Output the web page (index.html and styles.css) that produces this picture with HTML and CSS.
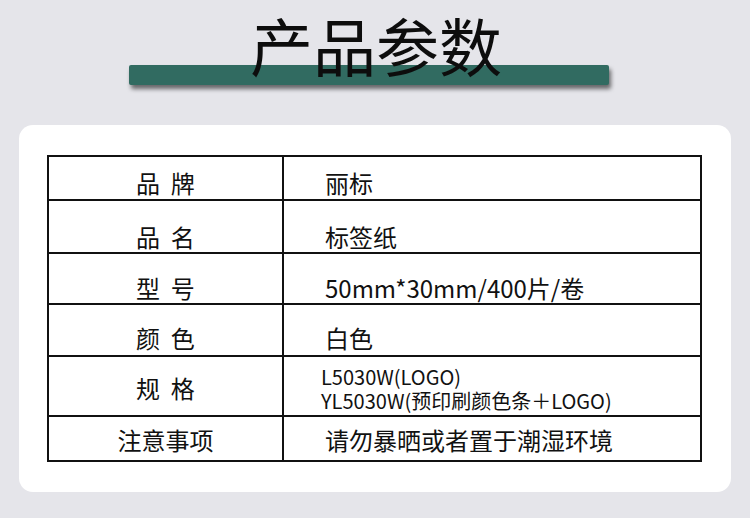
FILE: index.html
```html
<!DOCTYPE html>
<html lang="zh-CN">
<head>
<meta charset="utf-8">
<title>产品参数</title>
<link rel="stylesheet" href="styles.css">
</head>
<body>
<div class="header">
  <h1 class="title">产品参数</h1>
  <div class="bar"></div>
</div>
<div class="card">
  <div class="table">
    <div class="row r1">
      <div class="label">品&nbsp; 牌</div>
      <div class="value">丽标</div>
    </div>
    <div class="row r2">
      <div class="label">品&nbsp; 名</div>
      <div class="value">标签纸</div>
    </div>
    <div class="row r3">
      <div class="label">型&nbsp; 号</div>
      <div class="value">50mm*30mm/400片/卷</div>
    </div>
    <div class="row r4">
      <div class="label">颜&nbsp; 色</div>
      <div class="value">白色</div>
    </div>
    <div class="row r5">
      <div class="label">规&nbsp; 格</div>
      <div class="value spec">
        <div class="spec-line">L5030W(LOGO)</div>
        <div class="spec-line">YL5030W(预印刷颜色条＋LOGO)</div>
      </div>
    </div>
    <div class="row r6">
      <div class="label">注意事项</div>
      <div class="value">请勿暴晒或者置于潮湿环境</div>
    </div>
  </div>
</div>
</body>
</html>
```

FILE: styles.css
```css
html, body {
  margin: 0;
  padding: 0;
}
body {
  width: 750px;
  height: 518px;
  overflow: hidden;
  background: #e5e5ea;
  font-family: "Noto Sans CJK SC", "Noto Sans", sans-serif;
  color: #111;
}
.header {
  height: 125px;
  display: flex;
  flex-direction: column;
  align-items: center;
}
.title {
  margin: 6px 0 0 2px;
  font-size: 63px;
  line-height: 1.2;
  font-weight: 400;
  position: relative;
  z-index: 1;
  color: #0d0d0d;
}
.bar {
  align-self: flex-start;
  margin-left: 129px;
  margin-top: -17px;
  width: 480px;
  height: 20px;
  background: #316b61;
  border-radius: 2px;
  box-shadow: 2px 4px 4px rgba(0, 0, 0, 0.55);
}
.card {
  margin: 0 19px;
  height: 367px;
  box-sizing: border-box;
  padding: 30px 29px 30px 28px;
  background: #fff;
  border-radius: 14px;
}
.table {
  border: 2px solid #111;
}
.row {
  display: flex;
  box-sizing: border-box;
}
.row + .row {
  border-top: 2px solid #111;
}
.label {
  width: 235px;
  border-right: 2px solid #111;
  display: flex;
  justify-content: center;
  align-items: center;
  font-size: 24px;
  line-height: 1.2;
  box-sizing: border-box;
}
.value {
  flex: 1;
  padding-left: 41px;
  display: flex;
  align-items: center;
  font-size: 24px;
  line-height: 1.2;
  box-sizing: border-box;
}
.spec {
  flex-direction: column;
  align-items: flex-start;
  justify-content: center;
  font-size: 20px;
  padding-left: 37px;
}
.spec-line {
  line-height: 24px;
  height: 24px;
}
.r1 { height: 42px; }
.r2 { height: 53px; }
.r3 { height: 51px; }
.r4 { height: 52px; }
.r5 { height: 60px; }
.r6 { height: 45px; }
.r1 > div { padding-top: 10px; }
.r2 > div { padding-top: 21px; }
.r3 > div { padding-top: 19px; }
.r4 > div { padding-top: 16px; }
.r5 > .label { padding-top: 4px; }
.r5 > .spec { padding-top: 6px; }
.r6 > div { padding-top: 3px; }
```
